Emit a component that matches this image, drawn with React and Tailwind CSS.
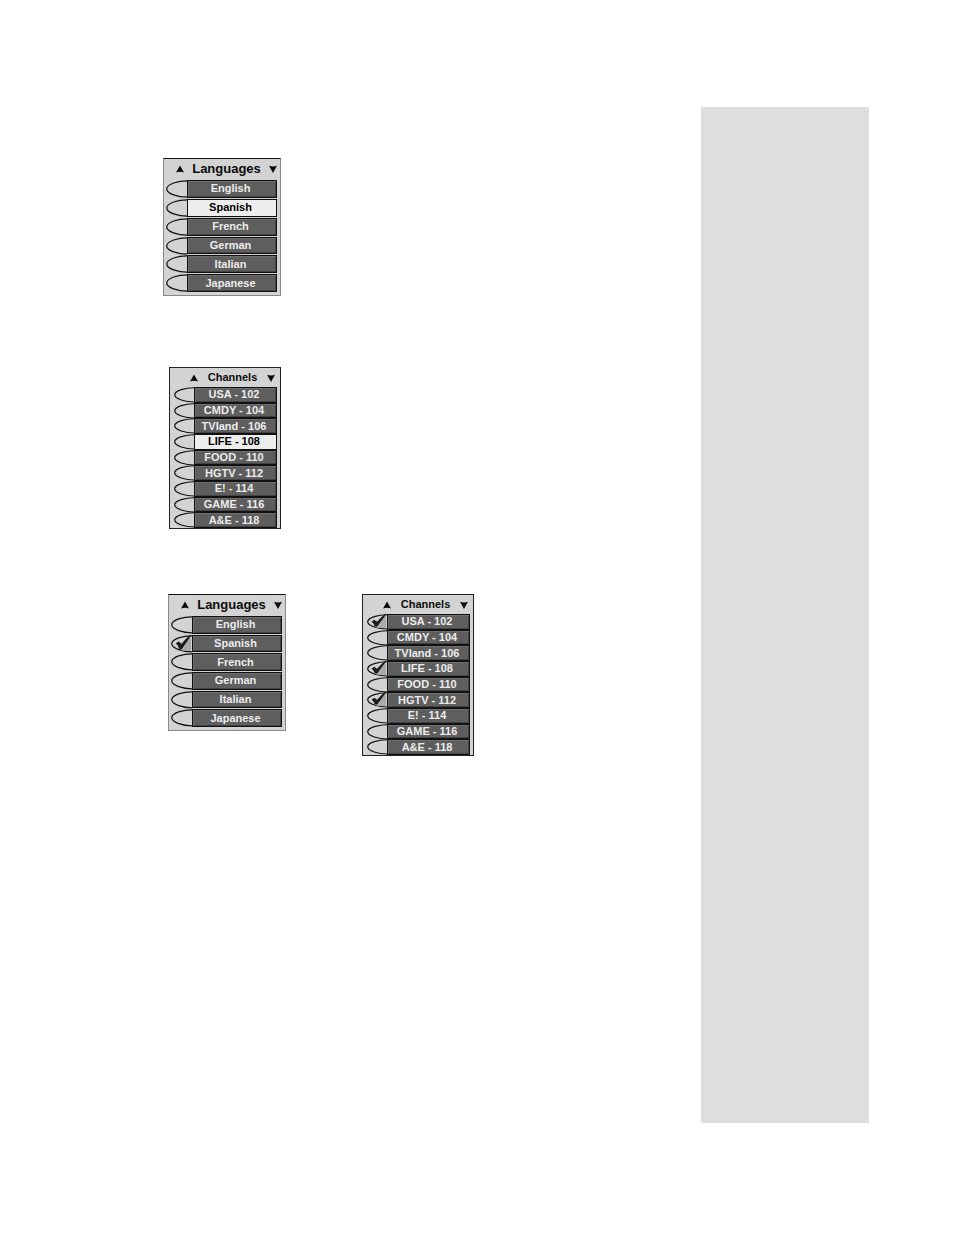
import React, { useState } from 'react'
import clsx from 'clsx'

const LANGUAGES = ['English', 'Spanish', 'French', 'German', 'Italian', 'Japanese']

const CHANNELS = [
  'USA - 102',
  'CMDY - 104',
  'TVland - 106',
  'LIFE - 108',
  'FOOD - 110',
  'HGTV - 112',
  'E! - 114',
  'GAME - 116',
  'A&E - 118'
]

const Arrow = ({ down }) => (
  <svg viewBox="0 0 8 8" className="block w-2 h-2" aria-hidden="true">
    <path d={down ? 'M0 0.8 Q4 2 8 0.8 L4 8 Z' : 'M4 0.5 L8 7.5 Q4 6 0 7.5 Z'} fill="#0c0c0c" />
  </svg>
)

// Half oval to the left of a row, with the tick on top when it is picked
const Oval = ({ checked }) => (
  <svg viewBox="0 0 22 18" preserveAspectRatio="none" className="block h-0 min-h-full w-full overflow-visible" aria-hidden="true">
    <path d="M22 0.8 C13 0.8 0.8 4 0.8 9 C0.8 14 13 17.2 22 17.2" fill="#d3d3d3" stroke="#111" strokeWidth="1.3" />
    {checked && (
      <>
        <path d="M9 15 L13 14 L18 3 L21 3 L21 16 L13 16 Z" fill="#aaa" />
        <path d="M5 8.5 L8 6.5 L11 9 L16 3.500 L20.500 -0.500 L21 0.500 L17.500 5.500 L11.500 14.500 L8.500 14.500 Q8 11 5 8.500 Z" fill="#1c1c1c" />
      </>
    )}
  </svg>
)

const Row = ({ label, checked, active, wide, onToggle }) => (
  <label className="relative flex min-h-0 cursor-pointer">
    <input type="checkbox" checked={checked} onChange={onToggle} className="sr-only" />
    <span className={clsx('shrink-0', wide ? 'w-[21px]' : 'w-5')}>
      <Oval checked={checked} />
    </span>
    <span
      className={clsx(
        'flex flex-1 items-center justify-center border border-[#111] pr-[3px] text-[11px] leading-none font-bold whitespace-nowrap',
        active
          ? 'bg-[#ededed] text-black'
          : 'bg-[#5e5e5e] text-[#ececec] shadow-[inset_1px_1px_0_#6e6e6e,inset_-1px_-1px_0_#444]'
      )}
    >
      {label}
    </span>
  </label>
)

const Menu = ({ title, items, picked = [], active, wide, className }) => {
  const [selected, setSelected] = useState(picked)

  const toggle = (item) =>
    setSelected(selected.includes(item) ? selected.filter((s) => s !== item) : [...selected, item])

  return (
    <fieldset className={clsx('flex flex-col bg-[#d3d3d3] border', className)}>
      <div
        className={clsx(
          'flex shrink-0 items-center justify-between',
          wide ? 'h-[21px] pb-[2px] pl-[10px] text-[13px]' : 'h-[19px] pl-4 pr-[2px] text-[11px]'
        )}
      >
        <button type="button" aria-label={`Scroll ${title} up`}>
          <Arrow />
        </button>
        <h2 className="font-bold leading-none text-[#0c0c0c]">{title}</h2>
        <button type="button" aria-label={`Scroll ${title} down`}>
          <Arrow down />
        </button>
      </div>
      <div className={clsx('grid min-h-0 flex-1 auto-rows-fr', wide && 'gap-px')}>
        {items.map((item) => (
          <Row
            key={item}
            label={item}
            wide={wide}
            active={item === active}
            checked={selected.includes(item)}
            onToggle={() => toggle(item)}
          />
        ))}
      </div>
    </fieldset>
  )
}

const LanguageMenu = ({ className, ...props }) => (
  <Menu
    title="Languages"
    items={LANGUAGES}
    wide
    className={clsx('w-[118px] pl-[2px] pr-[3px] pb-[3px] border-[#888] border-t-[#111]', className)}
    {...props}
  />
)

const ChannelMenu = (props) => (
  <Menu title="Channels" items={CHANNELS} className="w-28 h-[162px] pl-1 pr-[3px] border-[#222]" {...props} />
)

const App = () => {
  return (
    <div className="flex min-h-screen bg-white pt-[107px] pb-28 pr-[85px] font-['Liberation_Sans',Arial,sans-serif]">
      <main className="flex-1 pl-[163px] pt-[51px]">
        <LanguageMenu className="h-[138px]" active="Spanish" />
        <div className="mt-[71px] ml-1.5">
          <ChannelMenu active="LIFE - 108" />
        </div>
        <div className="mt-[65px] ml-[5px] flex items-start gap-[76px]">
          <LanguageMenu className="h-[137px]" picked={['Spanish']} />
          <ChannelMenu picked={['USA - 102', 'LIFE - 108', 'HGTV - 112']} />
        </div>
      </main>
      <aside className="w-[168px] shrink-0 bg-[#dedede]" />
    </div>
  )
}

export default App
